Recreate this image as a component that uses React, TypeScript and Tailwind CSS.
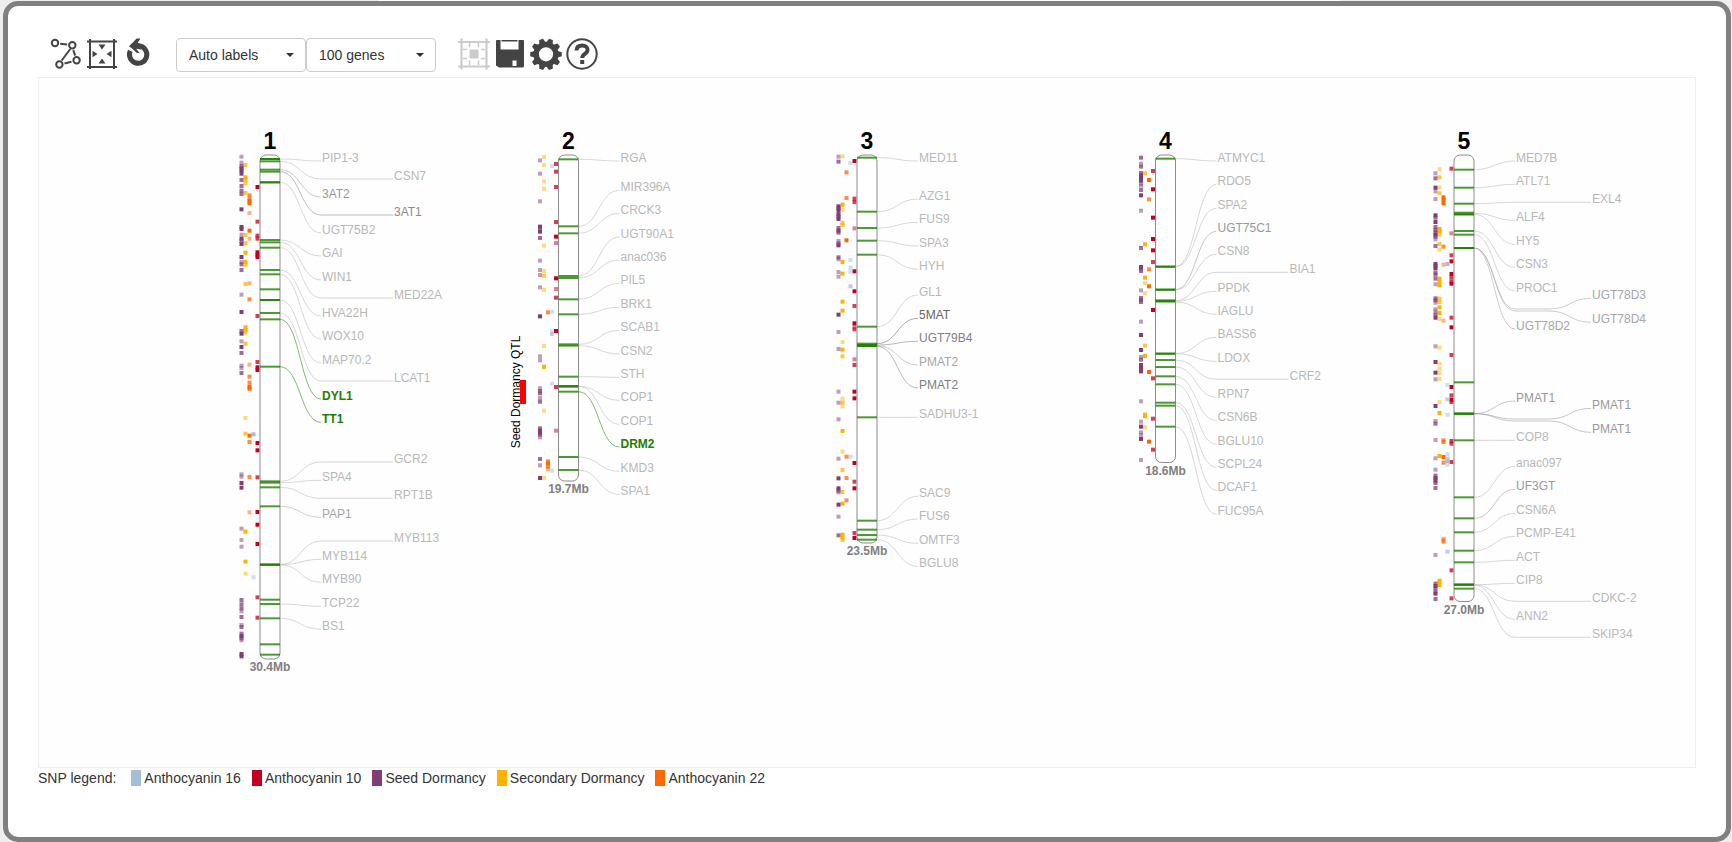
import { useState } from "react";
import type { ReactNode } from "react";

type Trait = "seed" | "secondary" | "antho22" | "antho16" | "antho10";

interface Gene {
  name: string;
  at: number;
  label: number;
  far?: boolean;
  via?: number;
  tone?: string;
  picked?: boolean;
}

interface Chromosome {
  id: string;
  x: number;
  end: number;
  size: string;
  bands: number[];
  snps: Record<Trait, string>;
  genes: Gene[];
}

const TRAITS: { key: Trait; label: string; color: string; swatch: string }[] = [
  { key: "antho16", label: "Anthocyanin 16", color: "#a6bdd7", swatch: "bg-[#a6bdd7]" },
  { key: "antho10", label: "Anthocyanin 10", color: "#c10020", swatch: "bg-[#c10020]" },
  { key: "seed", label: "Seed Dormancy", color: "#803e75", swatch: "bg-[#803e75]" },
  { key: "secondary", label: "Secondary Dormancy", color: "#ffb300", swatch: "bg-[#ffb300]" },
  { key: "antho22", label: "Anthocyanin 22", color: "#ff6800", swatch: "bg-[#ff6800]" },
];

// SNP columns from the chromosome outwards; traits without marks take no column.
const COLUMN_ORDER: Trait[] = ["antho10", "antho16", "antho22", "secondary", "seed"];

// Track positions are in thirds of a drawing unit, measured from y = 120.
const toY = (track: number) => 120 + track / 3;

// Score classes of SNP marks: a = weak, b = medium, c = strong.
const SCORE: Record<string, number> = { a: 0.5, b: 0.75, c: 1 };

const g = (name: string, label: number, at: number, extra: Partial<Gene> = {}): Gene => ({
  name,
  label,
  at,
  ...extra,
});
const far = { far: true };
const picked = { picked: true };

const CHROMOSOMES: Chromosome[] = [
  {
    id: "1",
    x: 270,
    end: 659,
    size: "30.4Mb",
    bands: [
      117, 117, 124, 149, 155, 187, 187, 360, 367, 383, 450, 463, 508, 540, 540, 579, 598, 740, 1084, 1088, 1102, 1159,
      1334, 1334, 1334, 1439, 1452, 1495, 1573, 1604,
    ],
    snps: {
      seed: "110a 128a 138b 145c 152c 161c 180b 198b 212b 222b 268c 321c 327c 344a 356c 363b 372c 411c 426a 433b 450b 524a 576c 633b 641c 664a 681c 699b 737a 744a 759b 1063a 1070a 1089c 1103c 1226a 1260a 1280a 1440b 1453b 1465b 1474a 1491b 1515a 1521b 1541b 1548c 1555b 1561a 1602c 1609c",
      secondary: "135b 172c 180b 190b 219b 345b 369b 398c 426c 434b 492b 622c 630c 637b 671b 894a 941b 1235c 1325c 1361a",
      antho22: "226b 236b 243c 250c 279a 332c 356a 490a 538b 734a 770b 788b 800c 806c 947c 966b 1071b 1177a",
      antho16: "943c 1372a",
      antho10: "201c 305b 347b 356b 397c 405c 411c 588b 726b 742c 750c 969c 991c 1072b 1176c 1214c 1272c 1432b 1493b",
    },
    genes: [
      g("PIP1-3", 113, 117),
      g("CSN7", 167, 124, far),
      g("3AT2", 221, 149, { tone: "#999999" }),
      g("3AT1", 275, 155, { far: true, tone: "#8c8c8c" }),
      g("UGT75B2", 329, 187),
      g("GAI", 398, 360),
      g("WIN1", 470, 367),
      g("MED22A", 524, 383, far),
      g("HVA22H", 578, 450),
      g("WOX10", 647, 463),
      g("MAP70.2", 719, 540),
      g("LCAT1", 773, 579, far),
      g("DYL1", 827, 598, picked),
      g("TT1", 897, 740, picked),
      g("GCR2", 1016, 1084, far),
      g("SPA4", 1071, 1088),
      g("RPT1B", 1125, 1102, far),
      g("PAP1", 1182, 1159, { tone: "#a6a6a6" }),
      g("MYB113", 1253, 1334, far),
      g("MYB114", 1308, 1334),
      g("MYB90", 1377, 1334),
      g("TCP22", 1449, 1452),
      g("BS1", 1518, 1495),
    ],
  },
  {
    id: "2",
    x: 568.5,
    end: 481,
    size: "19.7Mb",
    bands: [118, 319, 340, 468, 474, 538, 583, 673, 677, 770, 799, 799, 799, 815, 1011, 1050],
    snps: {
      seed: "121a 161a 244a 320c 328b 335c 354b 422a 450a 465a 502a 589c 709a 721a 805a 813b 820b 834a 845b 925b 932c 938c 944b 952a 1017b 1036a 1074c",
      secondary: "111a 135a 184a 206a 377a 453a 467b 510a 678a 740c 742b 872a 1074a",
      antho22: "577b 1024b 1030c 1040b 1048a",
      antho16: "138a 575a 634a 642b 791a 1052a",
      antho10: "132b 155b 201b 306b 350c 369a 475c 507a 533b 633c 801b 932a",
    },
    genes: [
      g("RGA", 113, 118),
      g("MIR396A", 201, 319),
      g("CRCK3", 270, 340),
      g("UGT90A1", 341, 468),
      g("anac036", 410, 474),
      g("PIL5", 480, 538),
      g("BRK1", 552, 583),
      g("SCAB1", 621, 673),
      g("CSN2", 692, 677),
      g("STH", 762, 770),
      g("COP1", 831, 799),
      g("COP1", 903, 799),
      g("DRM2", 971, 815, picked),
      g("KMD3", 1044, 1011),
      g("SPA1", 1113, 1050),
    ],
  },
  {
    id: "3",
    x: 867,
    end: 543,
    size: "23.5Mb",
    bands: [113, 275, 324, 362, 404, 620, 671, 675, 675, 678, 678, 892, 1202, 1229, 1245, 1259],
    snps: {
      seed: "110a 125b 259c 265c 272c 283c 290c 297c 324b 332c 338b 363a 370b 376c 412b 418a 456a 470a 584c 636a 687a 815a 848a 898a 1016a 1075c 1105c 1112b 1117a 1154c 1190a 1246b",
      secondary: "109a 254c 270a 309b 315b 426c 461c 545c 572c 666a 689c 709b 836a 848b 859a 933c 995a 1050b 1116b 1151c 1244c 1252c 1260b",
      antho22: "157b 234b 361c 1010b 1074b 1141b",
      antho16: "129a 420a 443a 455a 499b 1010a",
      antho10: "123c 236b 246b 325a 454c 514c 558b 610c 620a 628b 718a 735b 815c 835c 1029c 1085b 1105c 1239b 1254c",
    },
    genes: [
      g("MED11", 113, 113),
      g("AZG1", 227, 275),
      g("FUS9", 297, 324),
      g("SPA3", 368, 362),
      g("HYH", 438, 404),
      g("GL1", 515, 620),
      g("5MAT", 585, 671, { tone: "#666666" }),
      g("UGT79B4", 654, 675, { tone: "#808080" }),
      g("PMAT2", 725, 677, { tone: "#a6a6a6" }),
      g("PMAT2", 794, 679, { tone: "#808080" }),
      g("SADHU3-1", 882, 892),
      g("SAC9", 1119, 1202),
      g("FUS6", 1187, 1229),
      g("OMTF3", 1260, 1245),
      g("BGLU8", 1329, 1259),
    ],
  },
  {
    id: "4",
    x: 1165.5,
    end: 462.5,
    size: "18.6Mb",
    bands: [116, 440, 440, 509, 509, 541, 544, 544, 701, 701, 720, 741, 769, 793, 848, 857, 920],
    snps: {
      seed: "113b 131a 140b 159b 166c 174c 182c 191a 197a 210b 226c 272a 384b 441c 446b 453b 511a 534b 540b 546b 605a 645c 690c 711a 719b 735c 745c 754c 844a 905a 920c 937a 945a 957c 1020a",
      secondary: "160b 373c 473c 489a 520a 677b 708c 884c 889c 922a",
      antho22: "180c 238b 448b 499c 756c 965c",
      antho16: "",
      antho10: "153b 208c 293c 357c 391c 426b 570c 775b 896b 989b",
    },
    genes: [
      g("ATMYC1", 113, 116),
      g("RDO5", 183, 440),
      g("SPA2", 255, 440),
      g("UGT75C1", 324, 509, { tone: "#999999" }),
      g("CSN8", 393, 509),
      g("BIA1", 447, 542, far),
      g("PPDK", 504, 544),
      g("IAGLU", 573, 546),
      g("BASS6", 642, 701),
      g("LDOX", 714, 701),
      g("CRF2", 768, 720, far),
      g("RPN7", 822, 741),
      g("CSN6B", 891, 769),
      g("BGLU10", 963, 793),
      g("SCPL24", 1032, 848),
      g("DCAF1", 1101, 857),
      g("FUC95A", 1173, 920),
    ],
  },
  {
    id: "5",
    x: 1464,
    end: 601.5,
    size: "27.0Mb",
    bands: [
      149, 203, 251, 278, 283, 283, 333, 344, 384, 384, 384, 787, 881, 881, 881, 961, 1132, 1195, 1237, 1292, 1327,
      1394, 1394, 1394, 1406,
    ],
    snps: {
      seed: "160a 175b 203c 214a 237a 286c 293b 306c 321b 330b 337b 344c 350b 358a 378b 432c 438c 445c 458b 464b 476b 493a 535b 541b 548a 568a 575a 584b 593c 679a 726c 758c 778a 858c 903a 911b 960a 1015a 1049a 1067b 1074c 1082c 1089b 1104b 1305a 1391b 1398c 1405b 1415b 1421c 1437b",
      secondary: "148a 172b 203a 220b 327c 334c 343b 372b 389a 476c 484c 495c 536b 546b 562c 579c 597a 683a 731a 746a 759a 777a 846a 879c 1008c 1382c 1388c 1395c",
      antho22: "232c 240c 250c 380b 434a 602a 961b 966b 1011c 1028b 1258b 1265b",
      antho16: "432c 795a 838b 884a 1003a 1016b 1023c 1034a 1295b",
      antho10: "146b 340a 406b 424c 462c 472b 484b 491c 593b 622c 705b 801c 826b 839c 846b 963b 971b 1026b 1351b 1435b",
    },
    genes: [
      g("MED7B", 113, 149),
      g("ATL71", 183, 203),
      g("EXL4", 237, 251, far),
      g("ALF4", 291, 280),
      g("HY5", 363, 283),
      g("CSN3", 432, 333),
      g("PROC1", 503, 344),
      g("UGT78D3", 525, 384, { far: true, via: 567, tone: "#a6a6a6" }),
      g("UGT78D4", 597, 384, { far: true, via: 573, tone: "#a6a6a6" }),
      g("UGT78D2", 617, 384, { tone: "#a6a6a6" }),
      g("PMAT1", 833, 881, { tone: "#999999" }),
      g("PMAT1", 855, 881, { far: true, via: 897, tone: "#999999" }),
      g("PMAT1", 927, 881, { far: true, via: 903, tone: "#999999" }),
      g("COP8", 951, 961),
      g("anac097", 1029, 1132),
      g("UF3GT", 1098, 1195, { tone: "#999999" }),
      g("CSN6A", 1170, 1237),
      g("PCMP-E41", 1239, 1292),
      g("ACT", 1311, 1327),
      g("CIP8", 1380, 1394),
      g("CDKC-2", 1434, 1394, far),
      g("ANN2", 1488, 1396),
      g("SKIP34", 1542, 1406, far),
    ],
  },
];

const curve = (x0: number, y0: number, x1: number, y1: number) => {
  const mid = (x0 + x1) / 2;
  return `C${mid} ${y0} ${mid} ${y1} ${x1} ${y1}`;
};

function GeneLabel({ gene, x, farOffset }: { gene: Gene; x: number; farOffset: number }) {
  const y0 = toY(gene.at);
  const y1 = toY(gene.label + 10);
  const start = x + 10;
  const near = x + 51;
  const textX = x + (gene.far ? farOffset : 52);
  let d = `M${start} ${y0}`;
  if (gene.via !== undefined) {
    const v = toY(gene.via);
    d += `${curve(start, y0, near, v)}H${x + 85}${curve(x + 85, v, textX - 1, y1)}`;
  } else {
    d += curve(start, y0, near, y1);
    if (gene.far) d += `H${textX - 1}`;
  }
  const color = gene.picked ? "#208000" : (gene.tone ?? "#b8b8b8");
  return (
    <g>
      <path d={d} fill="none" stroke={color} strokeOpacity={gene.picked ? 0.55 : 0.55} />
      <text x={textX} y={toY(gene.label + 13)} fontSize="12" fontWeight={gene.picked ? 700 : 400} fill={color}>
        {gene.name}
      </text>
    </g>
  );
}

function ChromosomeTrack({ data }: { data: Chromosome }) {
  const farOffset = data.id === "5" ? 128 : 124;
  const columns = COLUMN_ORDER.filter((key) => data.snps[key] !== "");
  return (
    <g>
      <text x={data.x} y="149" fontSize="23" fontWeight="700" textAnchor="middle" fill="#000000">
        {data.id}
      </text>
      {columns.map((key, column) =>
        data.snps[key].split(" ").map((mark, i) => (
          <rect
            key={`${key}${i}`}
            x={data.x - 14.5 - column * 4}
            y={toY(parseInt(mark, 10)) - 2}
            width="4"
            height="4"
            fill={TRAITS.find((t) => t.key === key)?.color}
            fillOpacity={SCORE[mark.slice(-1)]}
          />
        )),
      )}
      <rect x={data.x - 10} y="155" width="20" height={data.end - 155} rx="6" fill="#ffffff" stroke="#8c8c8c" />
      {data.bands.map((band, i) => (
        <rect key={i} x={data.x - 10} y={toY(band) - 1} width="20" height="2" fill="#208000" fillOpacity="0.8" />
      ))}
      {data.genes.map((gene, i) => (
        <GeneLabel key={i} gene={gene} x={data.x} farOffset={farOffset} />
      ))}
      <text x={data.x} y={data.end + 12} fontSize="12" fontWeight="700" textAnchor="middle" fill="#808080">
        {data.size}
      </text>
    </g>
  );
}

function GenomeMap() {
  return (
    <svg
      role="img"
      aria-label="Genome map"
      viewBox="39 78 1656 689"
      className="block h-auto w-full"
      fontFamily="'Liberation Sans', Arial, sans-serif"
    >
      {CHROMOSOMES.map((c) => (
        <ChromosomeTrack key={c.id} data={c} />
      ))}
      <text transform="translate(520 392) rotate(-90)" textAnchor="middle" fontSize="12" fill="#000000">
        Seed Dormancy QTL
      </text>
      <rect x="520" y="380" width="6" height="24" fill="#ff0000" />
    </svg>
  );
}

function ToolButton({ label, children, disabled }: { label: string; children: ReactNode; disabled?: boolean }) {
  return (
    <button
      type="button"
      aria-label={label}
      disabled={disabled}
      className="flex h-8 w-9 items-center justify-center text-[#444444] disabled:text-[#cccccc]"
    >
      <svg viewBox="0 0 32 32" className="size-8" fill="currentColor" stroke="none" aria-hidden="true">
        {children}
      </svg>
    </button>
  );
}

function NetworkIcon() {
  return (
    <g fill="none" stroke="currentColor" strokeWidth="2">
      <circle cx="5" cy="5" r="3.200" />
      <circle cx="22.300" cy="7.200" r="3.200" />
      <circle cx="9.400" cy="26.500" r="3.200" />
      <circle cx="26.600" cy="22.300" r="3.200" />
      <path d="M10.200 5.700l7 .9M20.300 11L11.600 22.500M23.300 12.200l1.900 5.500M14.500 25.500l7-1.700" />
    </g>
  );
}

function FitIcon() {
  return (
    <>
      <path fill="none" stroke="currentColor" strokeWidth="2" d="M4 1v30M28 1v30M1 3.500h30M1 29h30" />
      <path d="M12.500 6.500h7L16 11.500zM12.500 25.500h7L16 20.500zM6.500 12.800v6.500l5-3.200zM25.500 12.800v6.500l-5-3.200z" />
    </>
  );
}

function ReloadIcon() {
  return (
    <>
      <path fill="none" stroke="currentColor" strokeWidth="5" d="M18.500 8.200A8.700 8.700 0 1 1 8.300 12.800" />
      <path d="M7 8.200L14.700.5h3.800l-2.800 4.200c1.600.4 3.200.8 4.800 1.500l-1.700 5.200-4.600-.7 3.600 4.500-3.200-.4-4.800-4.500z" />
    </>
  );
}

function GridIcon() {
  return (
    <g stroke="currentColor" fill="none">
      <path strokeWidth="2.200" d="M3.500 .5v31M28.500 .5v31M0 4h32M0 28.500h32" />
      <path strokeWidth="1.500" d="M11.500 5v4.500M20.500 5v4.500M11.500 22.500V27M20.500 22.500V27M5 11.500h4M5 20.500h4M23 11.500h4M23 20.500h4" />
      <rect x="11.500" y="11.500" width="9" height="9" fill="currentColor" stroke="none" />
    </g>
  );
}

function SaveIcon() {
  return (
    <path
      fillRule="evenodd"
      d="M3 2h3.500v9.500h18V2H29a1 1 0 0 1 1 1v25a1.500 1.500 0 0 1-1.500 1.500H5L2 27.500V3a1 1 0 0 1 1-1zM7.500 2h16v1.500h-16zM18.500 22.500h4V28h-4z"
    />
  );
}

function GearIcon() {
  return (
    <>
      <circle cx="16" cy="16.300" r="9.800" fill="none" stroke="currentColor" strokeWidth="5.400" />
      {[0, 36, 72, 108, 144, 180, 216, 252, 288, 324].map((angle) => (
        <path key={angle} d="M26 12.500L31.800 14.300v4L26 20.100z" transform={`rotate(${angle} 16 16.3)`} />
      ))}
    </>
  );
}

function HelpIcon() {
  return (
    <g fill="none" stroke="currentColor">
      <circle cx="16" cy="16" r="14.700" strokeWidth="2" />
      <path strokeWidth="4" d="M10.500 12.500c.2-3.300 2.500-4.900 5.600-4.900 3.300 0 5.500 1.800 5.500 4.400 0 4-5.400 3.900-5.400 8" />
      <path strokeWidth="4" d="M16.200 22v4" />
    </g>
  );
}

function Picker({
  label,
  options,
  value,
  onChange,
}: {
  label: string;
  options: string[];
  value: string;
  onChange: (v: string) => void;
}) {
  return (
    <div className="grid w-[130px] items-center">
      <select
        aria-label={label}
        value={value}
        onChange={(e) => onChange(e.target.value)}
        className="col-start-1 row-start-1 h-[34px] w-full appearance-none rounded border border-[#cccccc] bg-white px-3 text-sm text-[#333333]"
      >
        {options.map((o) => (
          <option key={o}>{o}</option>
        ))}
      </select>
      <svg
        viewBox="0 0 8 4"
        className="pointer-events-none col-start-1 row-start-1 mr-3 h-1 w-2 justify-self-end"
        aria-hidden="true"
      >
        <path d="M0 0h8L4 4z" fill="#333333" />
      </svg>
    </div>
  );
}

export default function App() {
  const [labels, setLabels] = useState("Auto labels");
  const [genes, setGenes] = useState("100 genes");
  return (
    <div className="flex min-h-screen flex-col bg-[#eeeeee] pr-px pl-[3px] font-['Liberation_Sans',Arial,sans-serif] text-sm text-[#333333]">
      <div className="mr-[391px] ml-[376px] h-px bg-white" />
      <main className="flex flex-1 flex-col rounded-[15px] border-[5px] border-[#808080] bg-white px-[30px] pt-8">
        <div className="flex h-[39px] items-start gap-5 pl-[10px]">
          <div className="flex">
            <ToolButton label="Show network">
              <NetworkIcon />
            </ToolButton>
            <ToolButton label="Fit to screen">
              <FitIcon />
            </ToolButton>
            <ToolButton label="Reset">
              <ReloadIcon />
            </ToolButton>
          </div>
          <div className="flex">
            <Picker
              label="Labels"
              options={["Auto labels", "Checked labels", "No labels"]}
              value={labels}
              onChange={setLabels}
            />
            <Picker
              label="Number of genes"
              options={["50 genes", "100 genes", "200 genes"]}
              value={genes}
              onChange={setGenes}
            />
          </div>
          <div className="flex">
            <ToolButton label="Reset view" disabled>
              <GridIcon />
            </ToolButton>
            <ToolButton label="Save">
              <SaveIcon />
            </ToolButton>
            <ToolButton label="Settings">
              <GearIcon />
            </ToolButton>
            <ToolButton label="Help">
              <HelpIcon />
            </ToolButton>
          </div>
        </div>
        <div className="border border-[#eeeeee] bg-[#fefefe]">
          <GenomeMap />
        </div>
        <div className="flex items-center gap-[11px] leading-5">
          <span className="mr-1">SNP legend:</span>
          {TRAITS.map((t) => (
            <span key={t.key} className="flex items-center gap-[3px]">
              <span className={`h-4 w-[10px] ${t.swatch}`} />
              {t.label}
            </span>
          ))}
        </div>
      </main>
    </div>
  );
}
